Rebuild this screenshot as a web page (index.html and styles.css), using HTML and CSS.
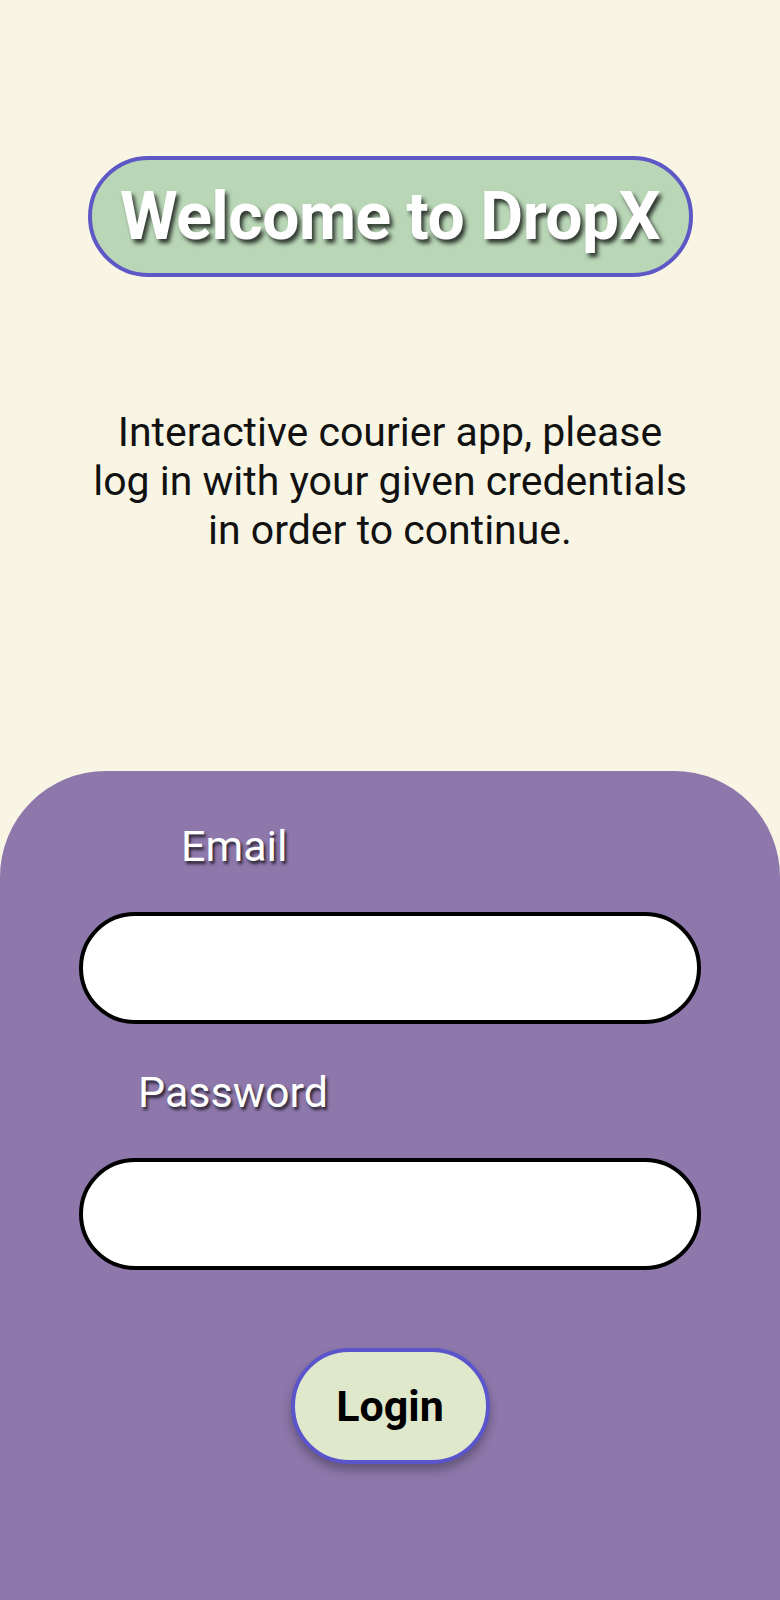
FILE: index.html
```html
<!DOCTYPE html>
<html>
<head>
<meta charset="utf-8">
<link rel="stylesheet" href="styles.css">
</head>
<body>
<div class="screen">
  <header class="top">
    <div class="title-pill"><h1 class="title">Welcome to DropX</h1></div>
    <p class="intro">Interactive courier app, please<br>log in with your given credentials<br>in order to continue.</p>
  </header>
  <main class="panel">
    <label class="label label-email">Email</label>
    <div class="field"></div>
    <label class="label label-pass">Password</label>
    <div class="field"></div>
    <button class="login">Login</button>
  </main>
</div>
</body>
</html>
```

FILE: styles.css
```css
html, body {
  margin: 0;
  padding: 0;
  background: #f8f5e4;
}
.screen {
  width: 780px;
  height: 1600px;
  display: flex;
  flex-direction: column;
  font-family: Roboto, "Noto Sans", sans-serif;
}
.top {
  display: flex;
  flex-direction: column;
  align-items: center;
  padding-top: 156px;
  height: 771px;
  flex-shrink: 0;
  box-sizing: border-box;
}
.title-pill {
  width: 605px;
  height: 121px;
  box-sizing: border-box;
  border: 4px solid #5e57c6;
  border-radius: 61px;
  background: #b9d7b7;
  display: flex;
  align-items: center;
  justify-content: center;
}
.title {
  margin: 0;
  font-size: 66px;
  font-weight: 700;
  color: #ffffff;
  text-shadow: 3px 4px 4px rgba(0,0,0,0.75);
  letter-spacing: -0.5px;
}
.intro {
  margin: 131px 0 0;
  font-size: 41px;
  line-height: 49px;
  text-align: center;
  color: #111;
}
.panel {
  flex: 1;
  background: #8d77ab;
  border-radius: 106px 106px 0 0;
  display: flex;
  flex-direction: column;
  align-items: center;
  padding-top: 49px;
}
.label {
  align-self: flex-start;
  color: #fff;
  font-size: 43px;
  line-height: 52px;
  text-shadow: 2px 3px 3px rgba(0,0,0,0.7);
}
.label-email { margin-left: 181px; }
.label-pass { margin-left: 138px; margin-top: 42px; }
.field {
  width: 622px;
  height: 112px;
  box-sizing: border-box;
  border: 4px solid #000;
  border-radius: 56px;
  background: #fff;
  margin-top: 40px;
}
.login {
  margin-top: 78px;
  width: 199px;
  height: 116px;
  box-sizing: border-box;
  border: 4px solid #5b55cc;
  border-radius: 58px;
  background: #e0e8cc;
  font-family: Roboto, sans-serif;
  font-size: 43px;
  font-weight: 700;
  color: #000;
  box-shadow: 0 6px 10px rgba(0,0,0,0.3);
  padding: 0;
}
```
